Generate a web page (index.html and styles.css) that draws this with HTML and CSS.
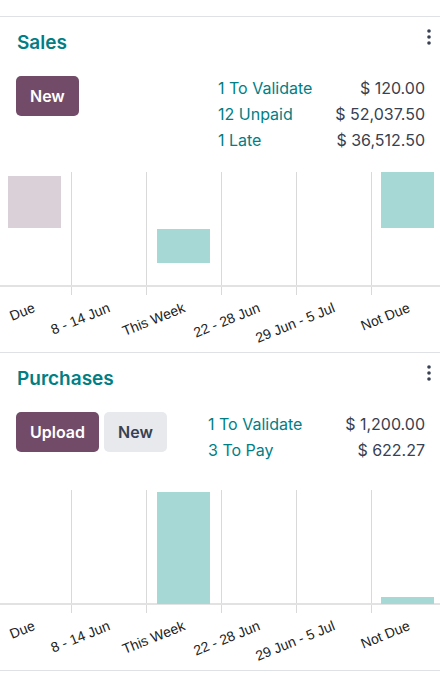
FILE: index.html
```html
<!DOCTYPE html>
<html lang="en">
<head>
    <meta charset="UTF-8">
    <meta name="viewport" content="width=device-width, initial-scale=1.0">
    <title>Accounting Dashboard</title>
    <link rel="stylesheet" href="styles.css">
</head>
<body>

<div class="dashboard">

    <div class="journal">
        <div class="journal-head">
            <a href="#" class="journal-title">Sales</a>
            <svg class="kebab" width="4" height="16" viewBox="0 0 4 16">
                <circle cx="2" cy="2" r="1.8"/>
                <circle cx="2" cy="8" r="1.8"/>
                <circle cx="2" cy="14" r="1.8"/>
            </svg>
        </div>
        <div class="journal-main">
            <div class="actions">
                <button class="btn btn-primary">New</button>
            </div>
            <div class="stats">
                <a href="#">1 To Validate</a><span>$ 120.00</span>
                <a href="#">12 Unpaid</a><span>$ 52,037.50</span>
                <a href="#">1 Late</a><span>$ 36,512.50</span>
            </div>
        </div>
        <svg class="chart" width="440" height="180" viewBox="0 0 440 180">
            <g class="grid">
                <line x1="71.5" y1="0" x2="71.5" y2="123"/>
                <line x1="146.5" y1="0" x2="146.5" y2="123"/>
                <line x1="221.5" y1="0" x2="221.5" y2="123"/>
                <line x1="296.5" y1="0" x2="296.5" y2="123"/>
                <line x1="371.5" y1="0" x2="371.5" y2="123"/>
            </g>
            <rect class="axis" x="0" y="113" width="440" height="2"/>
            <rect class="bar bar-past" x="8" y="4" width="53" height="52"/>
            <rect class="bar" x="157" y="57" width="53" height="34"/>
            <rect class="bar" x="381" y="0" width="53" height="56"/>
            <g class="labels">
                <text x="34.5" y="136" transform="rotate(-22 34.5 136)">Due</text>
                <text x="109.5" y="136" transform="rotate(-22 109.5 136)">8 - 14 Jun</text>
                <text x="184.5" y="136" transform="rotate(-22 184.5 136)">This Week</text>
                <text x="259.5" y="136" transform="rotate(-22 259.5 136)">22 - 28 Jun</text>
                <text x="334.5" y="136" transform="rotate(-22 334.5 136)">29 Jun - 5 Jul</text>
                <text x="409.5" y="136" transform="rotate(-22 409.5 136)">Not Due</text>
            </g>
        </svg>
    </div>

    <div class="journal journal-purchases">
        <div class="journal-head">
            <a href="#" class="journal-title">Purchases</a>
            <svg class="kebab" width="4" height="16" viewBox="0 0 4 16">
                <circle cx="2" cy="2" r="1.8"/>
                <circle cx="2" cy="8" r="1.8"/>
                <circle cx="2" cy="14" r="1.8"/>
            </svg>
        </div>
        <div class="journal-main">
            <div class="actions">
                <button class="btn btn-primary">Upload</button>
                <button class="btn btn-secondary">New</button>
            </div>
            <div class="stats">
                <a href="#">1 To Validate</a><span>$ 1,200.00</span>
                <a href="#">3 To Pay</a><span>$ 622.27</span>
            </div>
        </div>
        <svg class="chart" width="440" height="180" viewBox="0 0 440 180">
            <g class="grid">
                <line x1="71.5" y1="0" x2="71.5" y2="123"/>
                <line x1="146.5" y1="0" x2="146.5" y2="123"/>
                <line x1="221.5" y1="0" x2="221.5" y2="123"/>
                <line x1="296.5" y1="0" x2="296.5" y2="123"/>
                <line x1="371.5" y1="0" x2="371.5" y2="123"/>
            </g>
            <rect class="axis" x="0" y="113" width="440" height="2"/>
            <rect class="bar" x="157" y="2" width="53" height="112"/>
            <rect class="bar" x="381" y="107" width="53" height="7"/>
            <g class="labels">
                <text x="34.5" y="136" transform="rotate(-22 34.5 136)">Due</text>
                <text x="109.5" y="136" transform="rotate(-22 109.5 136)">8 - 14 Jun</text>
                <text x="184.5" y="136" transform="rotate(-22 184.5 136)">This Week</text>
                <text x="259.5" y="136" transform="rotate(-22 259.5 136)">22 - 28 Jun</text>
                <text x="334.5" y="136" transform="rotate(-22 334.5 136)">29 Jun - 5 Jul</text>
                <text x="409.5" y="136" transform="rotate(-22 409.5 136)">Not Due</text>
            </g>
        </svg>
    </div>

</div>

</body>
</html>
```

FILE: styles.css
```css
* {
    margin: 0;
    padding: 0;
    box-sizing: border-box;
}

html, body {
    width: 100%;
    height: 100%;
    background-color: #fff;
    color: #374151;
    font-family: Inter, "Noto Sans", sans-serif;
}

a {
    text-decoration: none;
    color: #017e84;
}

.dashboard {
    padding-top: 16px;
}

.journal {
    border-bottom: 1px solid #dee2e6;
}

.journal:first-child {
    border-top: 1px solid #dee2e6;
}

.journal-head {
    display: flex;
    justify-content: space-between;
    align-items: flex-start;
    padding: 14px 9px 21px 17px;
}

.journal-title {
    font-size: 19px;
    font-weight: 600;
    line-height: 24px;
}

.kebab {
    margin-top: -2px;
    fill: #374151;
}

.journal-main {
    display: flex;
    justify-content: space-between;
    align-items: flex-start;
    padding: 0 15px 0 16px;
}

.actions {
    display: flex;
    gap: 5px;
}

.btn {
    height: 40px;
    padding: 0 14px;
    border: none;
    border-radius: 5px;
    font-family: inherit;
    font-size: 16px;
    font-weight: 600;
    cursor: pointer;
}

.btn-primary {
    background-color: #714b67;
    color: #fff;
}

.btn-secondary {
    background-color: #e7e9ed;
    color: #374151;
}

.stats {
    display: grid;
    grid-template-columns: auto auto;
    justify-content: space-between;
    width: 207px;
    margin-top: -1px;
    font-size: 16px;
    line-height: 26px;
}

.journal-purchases .stats {
    width: 217px;
}

.stats span {
    text-align: right;
}

.chart {
    display: block;
    margin-top: 19px;
}

.journal-purchases .chart {
    margin-top: 27px;
}

.grid line {
    stroke: #d9d9d9;
    stroke-width: 1;
}

.axis {
    fill: #e2e2e2;
}

.bar {
    fill: #a6d8d6;
}

.bar-past {
    fill: #d9d1d7;
}

.labels text {
    font-family: "Liberation Sans", Arial, sans-serif;
    font-size: 14px;
    fill: #222;
    text-anchor: end;
    dominant-baseline: middle;
}
```
